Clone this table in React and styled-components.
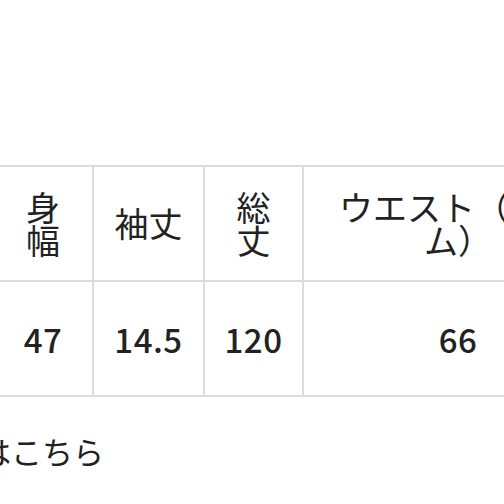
import React from "react";
import styled, { createGlobalStyle } from "styled-components";

const GlobalStyle = createGlobalStyle`
  body {
    margin: 0;
    background: #ffffff;
    font-family: "Noto Sans CJK JP", "Noto Sans", sans-serif;
    color: #222;
  }
`;

const Page = styled.div`
  width: 504px;
  height: 504px;
  overflow: hidden;
  padding-top: 165px;
  box-sizing: border-box;
`;

const SizeTable = styled.table`
  margin-left: -8px;
  border-collapse: collapse;
  table-layout: fixed;
  width: 620px;
`;

const Row = styled.tr`
  height: 115px;
`;

const Cell = styled.td`
  box-sizing: border-box;
  width: ${(p) => p.$w}px;
  border: 2px solid #dcdcdc;
  padding: 0 17px;
  text-align: center;
  vertical-align: middle;
  font-size: 34px;
  line-height: 0.97;
  font-weight: 400;
  line-break: strict;
`;

const NumCell = styled(Cell)`
  font-size: 33px;
  font-weight: 500;
  letter-spacing: 0.5px;
`;

const Note = styled.p`
  margin: 32px 0 0 -20px;
  font-size: 31px;
  line-height: 1.4;
  color: #222;
  white-space: nowrap;
`;

const columns = [
  { label: "身幅", value: "47", w: 100 },
  { label: "袖丈", value: "14.5", w: 111 },
  { label: "総丈", value: "120", w: 99 },
  { label: "ウエスト（総ゴム）", value: "66", w: 310 },
];

export default function App() {
  return (
    <>
      <GlobalStyle />
      <Page>
        <SizeTable>
          <colgroup>
            {columns.map((c) => (
              <col key={c.label} style={{ width: c.w }} />
            ))}
          </colgroup>
          <tbody>
            <Row>
              {columns.map((c) => (
                <Cell key={c.label} $w={c.w}>
                  {c.label}
                </Cell>
              ))}
            </Row>
            <Row>
              {columns.map((c) => (
                <NumCell key={c.label} $w={c.w}>
                  {c.value}
                </NumCell>
              ))}
            </Row>
          </tbody>
        </SizeTable>
        <Note>はこちら</Note>
      </Page>
    </>
  );
}
